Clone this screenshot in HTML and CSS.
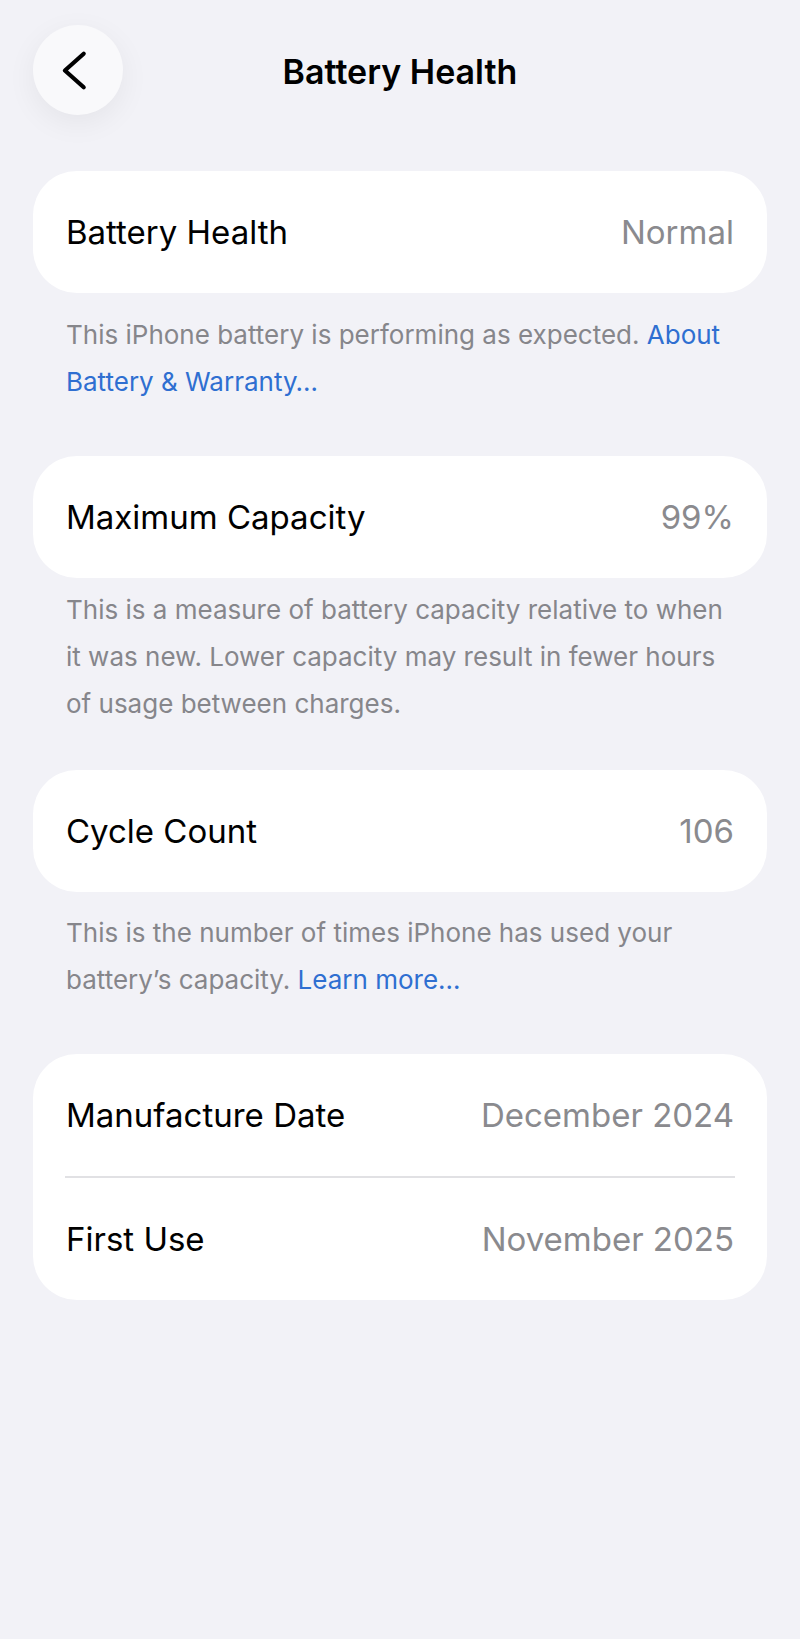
FILE: index.html
```html
<!DOCTYPE html>
<html lang="en">
<head>
<meta charset="utf-8">
<title>Battery Health</title>
<link rel="stylesheet" href="styles.css">
</head>
<body>
<div class="page">
  <header class="header">
    <button class="back" aria-label="Back">
      <svg class="back-icon" viewBox="0 0 90 90" width="90" height="90" aria-hidden="true">
        <path d="M50.7 28.7 L31.9 45.5 L50.7 62.3" fill="none" stroke="#000" stroke-width="4.2" stroke-linecap="round" stroke-linejoin="round"/>
      </svg>
    </button>
    <h1 class="title">Battery Health</h1>
    <span class="spacer"></span>
  </header>

  <section class="group group-first">
    <div class="card">
      <div class="row"><span class="label">Battery Health</span><span class="value">Normal</span></div>
    </div>
    <p class="footer">This iPhone battery is performing as expected. <a class="link" href="#">About Battery &amp; Warranty…</a></p>
  </section>

  <section class="group">
    <div class="card">
      <div class="row"><span class="label">Maximum Capacity</span><span class="value">99%</span></div>
    </div>
    <p class="footer footer-tight">This is a measure of battery capacity relative to when it was new. Lower capacity may result in fewer hours of usage between charges.</p>
  </section>

  <section class="group">
    <div class="card">
      <div class="row"><span class="label">Cycle Count</span><span class="value">106</span></div>
    </div>
    <p class="footer footer-low">This is the number of times iPhone has used your battery’s capacity. <a class="link" href="#">Learn more…</a></p>
  </section>

  <section class="group">
    <div class="card">
      <div class="row"><span class="label">Manufacture Date</span><span class="value">December 2024</span></div>
      <div class="sep"></div>
      <div class="row"><span class="label">First Use</span><span class="value">November 2025</span></div>
    </div>
  </section>
</div>
</body>
</html>
```

FILE: styles.css
```css
html, body {
  margin: 0;
  padding: 0;
}

body {
  background: #f2f2f7;
  font-family: Inter, "Noto Sans", "Liberation Sans", sans-serif;
  color: #000;
  min-height: 1639px;
}

.page {
  padding: 25px 33px 0 33px;
}

.header {
  display: grid;
  grid-template-columns: 90px 1fr 90px;
  align-items: center;
  height: 90px;
}

.back {
  width: 90px;
  height: 90px;
  border: none;
  padding: 0;
  border-radius: 50%;
  background: #f9f9fb;
  box-shadow: 0 8px 30px rgba(0, 0, 0, 0.06);
  display: flex;
  align-items: center;
  justify-content: center;
}

.back-icon {
  display: block;
}

.title {
  margin: 0;
  text-align: center;
  font-size: 34px;
  font-weight: 600;
  letter-spacing: 0;
  padding-top: 3px;
}

.group-first {
  margin-top: 56px;
}

.card {
  background: #fff;
  border-radius: 44px;
}

.row {
  height: 122px;
  display: flex;
  align-items: center;
  justify-content: space-between;
  padding: 0 33px 0 33px;
}

.label {
  font-size: 33px;
}

.value {
  font-size: 33px;
  color: #8a8a8e;
}

.sep {
  height: 2px;
  background: #e1e1e4;
  margin: 0 32px;
}

.footer {
  margin: 18px 0 51px 0;
  padding: 0 40px 0 33px;
  font-size: 26px;
  line-height: 47px;
  color: #86868b;
}

.footer-tight {
  margin-top: 8px;
  margin-bottom: 43px;
}

.footer-low {
  margin-top: 17px;
  margin-bottom: 51px;
}

.link {
  color: #2f6fd1;
  text-decoration: none;
}
```
